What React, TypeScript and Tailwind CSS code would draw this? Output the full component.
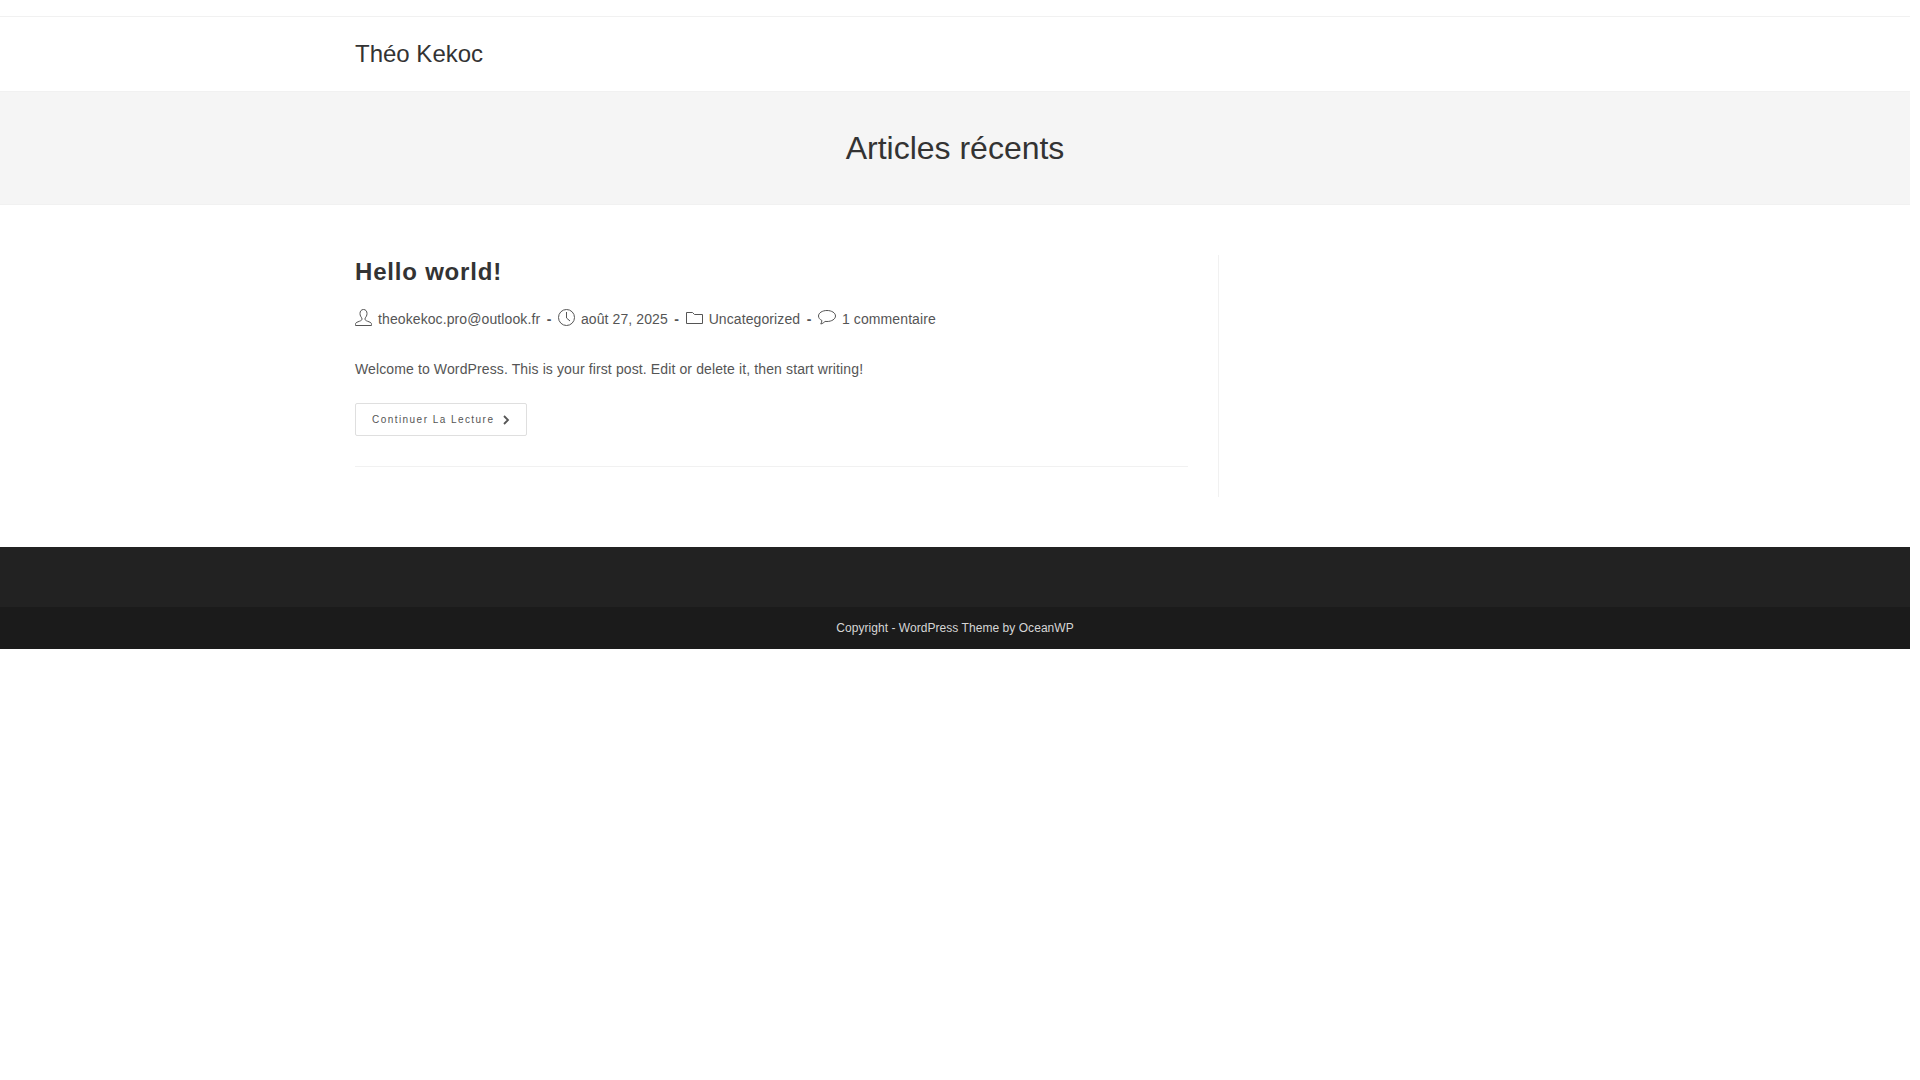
const iconClass = "-mt-[4px] shrink-0";

const UserIcon = () => (
  <svg width="17" height="17" viewBox="0 0 17 17" fill="none" stroke="#555" strokeWidth="1" className={iconClass}>
    <path d="M8.500.5C6.200.5 5 2.300 5 4.500c0 2 1 3.700 1.900 4.500v1.500c0 .7-1 1.200-2.600 1.800C2.500 13 .8 13.600.6 14.500c-.1.700-.1 2-.1 2h16s0-1.300-.1-2c-.2-.9-1.900-1.500-3.700-2.200-1.600-.6-2.600-1.100-2.600-1.800V9C11 8.200 12 6.500 12 4.500 12 2.300 10.800.5 8.500.5z" />
  </svg>
);

const ClockIcon = () => (
  <svg width="17" height="17" viewBox="0 0 17 17" fill="none" stroke="#555" strokeWidth="1" className={iconClass}>
    <circle cx="8.500" cy="8.500" r="8" />
    <path d="M8.500 3v6l3.500 3" />
  </svg>
);

const FolderIcon = () => (
  <svg width="17" height="17" viewBox="0 0 17 17" fill="none" stroke="#555" strokeWidth="1" className={iconClass}>
    <path d="M.5 3.500h6l2 2h8v9H.5z" strokeLinejoin="round" />
  </svg>
);

const CommentIcon = () => (
  <svg width="18" height="17" viewBox="0 0 18 17" fill="none" stroke="#555" strokeWidth="1" className={iconClass}>
    <path d="M9 1.500C4.300 1.500.5 3.900.5 7c0 1.900 1.300 3.500 3.400 4.500-.1.900-.5 2.400-1.100 3.500 1.700-.4 3.300-1.600 4.200-2.600.6.100 1.300.100 2 .100 4.700 0 8.500-2.400 8.500-5.500S13.700 1.500 9 1.500z" />
  </svg>
);

const Dash = () => <span className="mx-[6.5px] font-bold text-[#555]">-</span>;

export default function App() {
  return (
    <div className="min-h-screen w-[1910px] bg-white font-['Liberation_Sans',Arial,sans-serif] text-[#555]">
      {/* Top bar */}
      <div className="h-[17px] border-b border-[#f1f1f1]" />

      {/* Header */}
      <header className="h-[75px] border-b border-[#f1f1f1]">
        <div className="mx-auto flex h-full w-[1200px] items-center">
          <a className="text-[24px] leading-none text-[#333]">Théo Kekoc</a>
        </div>
      </header>

      {/* Page title */}
      <div className="flex h-[113px] items-center justify-center border-b border-[#f1f1f1] bg-[#f5f5f5]">
        <h1 className="text-[32px] leading-[1.4] text-[#333]">Articles récents</h1>
      </div>

      {/* Content */}
      <main className="mx-auto mt-[50px] flex w-[1200px]">
        <div className="h-[242px] w-[864px] border-r border-[#f1f1f1] pr-[30px]">
          <article className="border-b border-[#f1f1f1] pb-[30px]">
            <h2 className="text-[24px] font-bold leading-[34px] tracking-[0.8px] text-[#333]">Hello world!</h2>
            <ul className="mt-[16px] flex h-[28px] items-center text-[14px] tracking-[0.1px]">
              <li className="flex items-center gap-[6px]"><UserIcon /><span>theokekoc.pro@outlook.fr</span></li>
              <Dash />
              <li className="flex items-center gap-[6px]"><ClockIcon /><span>août 27, 2025</span></li>
              <Dash />
              <li className="flex items-center gap-[6px]"><FolderIcon /><span>Uncategorized</span></li>
              <Dash />
              <li className="flex items-center gap-[6px]"><CommentIcon /><span>1 commentaire</span></li>
            </ul>
            <p className="mt-[22px] text-[14px] leading-[28px] tracking-[0.12px]">
              Welcome to WordPress. This is your first post. Edit or delete it, then start writing!
            </p>
            <a className="mt-[20px] inline-flex h-[33px] items-center gap-[8px] rounded-[2px] border border-[#dfdfdf] px-[16px] text-[10px] tracking-[1.45px] text-[#555]">
              Continuer La Lecture
              <svg width="8" height="10" viewBox="0 0 8 10" fill="none" stroke="#555" strokeWidth="1.800">
                <path d="M2 1l4 4-4 4" />
              </svg>
            </a>
          </article>
        </div>
      </main>

      {/* Footer */}
      <footer className="mt-[50px]">
        <div className="h-[60px] bg-[#222]" />
        <div className="flex h-[42px] items-center justify-center bg-[#1b1b1b] text-[12px] tracking-[0.05px] text-[#d6d6d6]">
          Copyright - WordPress Theme by OceanWP
        </div>
      </footer>
    </div>
  );
}
